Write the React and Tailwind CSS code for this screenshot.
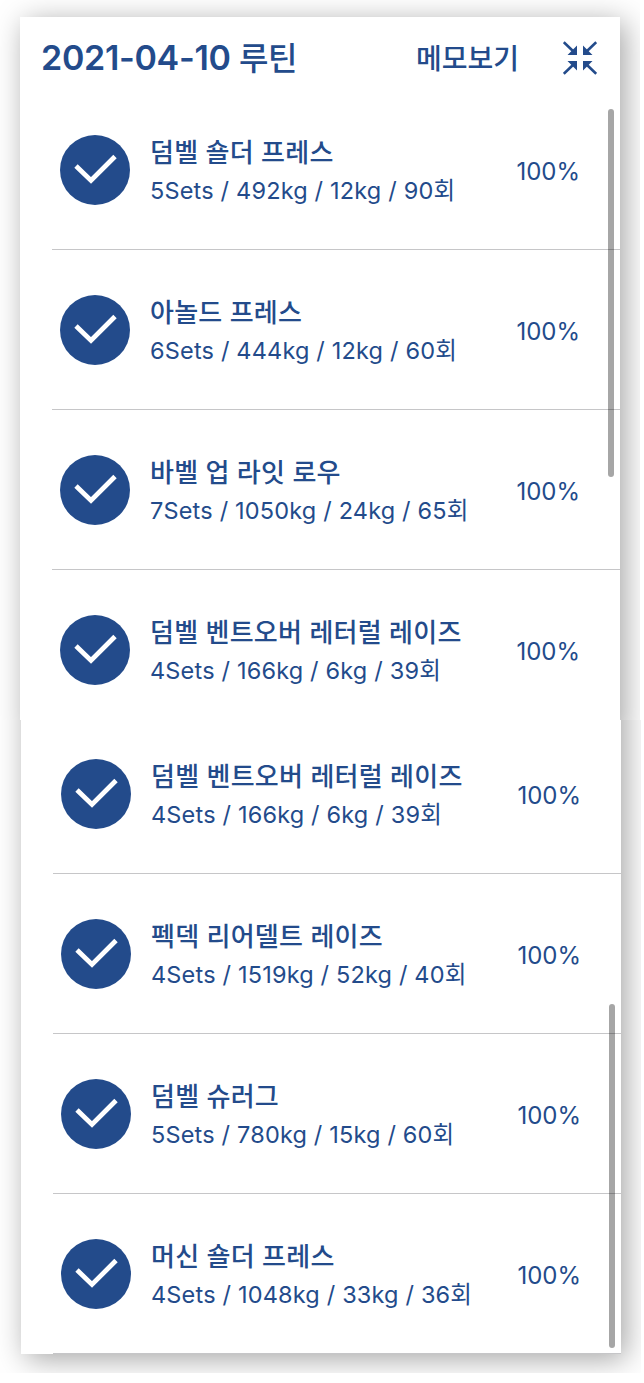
const firstPage = [
  { name: '덤벨 숄더 프레스', detail: '5Sets / 492kg / 12kg / 90회' },
  { name: '아놀드 프레스', detail: '6Sets / 444kg / 12kg / 60회' },
  { name: '바벨 업 라잇 로우', detail: '7Sets / 1050kg / 24kg / 65회' },
  { name: '덤벨 벤트오버 레터럴 레이즈', detail: '4Sets / 166kg / 6kg / 39회' },
];

const secondPage = [
  { name: '덤벨 벤트오버 레터럴 레이즈', detail: '4Sets / 166kg / 6kg / 39회' },
  { name: '펙덱 리어델트 레이즈', detail: '4Sets / 1519kg / 52kg / 40회' },
  { name: '덤벨 슈러그', detail: '5Sets / 780kg / 15kg / 60회' },
  { name: '머신 숄더 프레스', detail: '4Sets / 1048kg / 33kg / 36회' },
];

function CheckCircle() {
  return (
    <svg viewBox="0 0 70 70" className="size-[70px] shrink-0">
      <circle cx="35" cy="35" r="35" fill="#234b8b" />
      <path d="M16 31L31 45.5L55 21.5" fill="none" stroke="#fff" strokeWidth="4.8" />
    </svg>
  );
}

function CollapseIcon() {
  return (
    <svg viewBox="0 0 34 34" className="size-[34px] shrink-0" fill="#234b8b">
      <path d="M14 4.5V14H4.5ZM20 4.5V14H29.5ZM14 29.5V20H4.5ZM20 29.5V20H29.5Z" />
      <path
        d="M.8 1.2L11 11M33.2 1.2L23 11M.8 32.8L11 23M33.2 32.8L23 23"
        stroke="#234b8b"
        strokeWidth="2.6"
      />
    </svg>
  );
}

function ExerciseRow({ name, detail }) {
  return (
    <li className="ml-8 h-40 shrink-0 flex items-center border-b border-[#c6c6c8] pl-2 pt-px">
      <CheckCircle />
      <div className="ml-5 flex-1 whitespace-nowrap pt-0.5">
        <p className="text-[26px] leading-[39px] font-medium tracking-[0.25px]">{name}</p>
        <p className="text-[23.5px] leading-[38px] tracking-[0.18px]">{detail}</p>
      </div>
      <span className="mr-10 pt-[3px] text-[24px] leading-[38px]">100%</span>
    </li>
  );
}

export default function App() {
  return (
    <div className="h-[1383px] w-[644px] overflow-hidden bg-white text-[#234b8b] font-['Inter','Noto_Sans_CJK_KR',sans-serif]">
      <section className="h-[720px] w-[640px] overflow-hidden pl-5 pt-[17px]">
        <div className="relative h-[718px] w-[600px] bg-white shadow-[5px_5px_28px_rgba(0,0,0,0.36)]">
          <header className="flex h-[73px] items-center pl-[21px] pr-[23px] pt-2">
            <h1 className="pt-px text-[34px] font-semibold leading-[40px] tracking-[-0.3px] whitespace-nowrap">
              2021-04-10 <span className="text-[32px] font-medium tracking-[-0.5px]">루틴</span>
            </h1>
            <button className="ml-auto mr-11 pt-0.5 text-[28px] font-medium leading-[40px]">메모보기</button>
            <CollapseIcon />
          </header>
          <ul className="flex h-[640px] flex-col">
            {firstPage.map((item) => (
              <ExerciseRow key={item.name} {...item} />
            ))}
          </ul>
          <div className="absolute right-1.5 top-[92px] h-[368px] w-1.5 rounded-full bg-black/35" />
        </div>
      </section>

      <section className="flex h-[653px] w-[641px] flex-col justify-end overflow-hidden pl-[21px] pb-[19px]">
        <div className="relative flex h-[700px] w-[600px] shrink-0 flex-col justify-end bg-white shadow-[5px_5px_28px_rgba(0,0,0,0.36)]">
          <ul className="flex flex-col">
            {secondPage.map((item) => (
              <ExerciseRow key={item.name} {...item} />
            ))}
          </ul>
          <div className="absolute right-1.5 bottom-1.5 h-[344px] w-1.5 rounded-full bg-black/35" />
        </div>
      </section>
    </div>
  );
}
